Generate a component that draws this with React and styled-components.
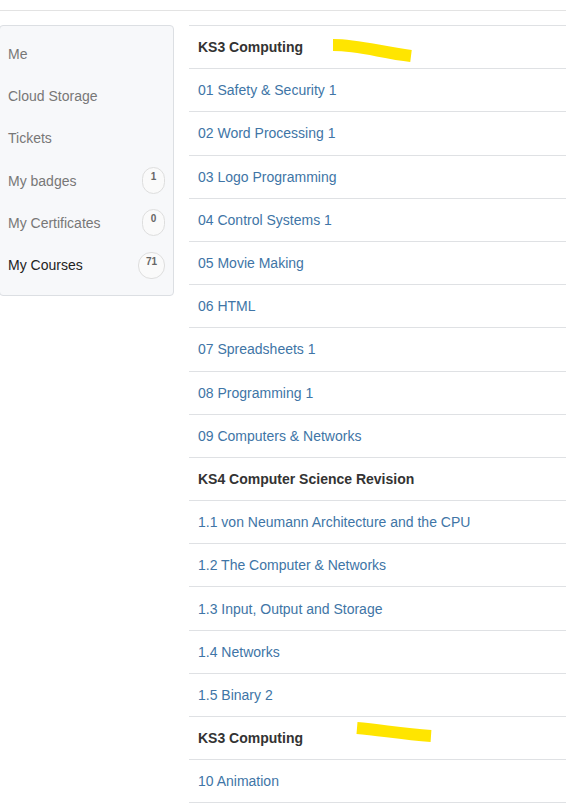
import React from 'react';
import styled, { createGlobalStyle } from 'styled-components';

const Global = createGlobalStyle`
  body {
    margin: 0;
    background: #fff;
    font-family: 'Liberation Sans', Arial, sans-serif;
    font-size: 14px;
    overflow: hidden;
  }
`;

const TopRule = styled.div`
  height: 10px;
  border-bottom: 1px solid #e3e3e3;
`;

const Layout = styled.div`
  display: flex;
  align-items: flex-start;
  gap: 15px;
  margin-top: 14px;
`;

const Sidebar = styled.nav`
  flex: 0 0 175px;
  margin-left: -1px;
  box-sizing: border-box;
  padding: 7px 8px 9px 8px;
  background: #f7f8fa;
  border: 1px solid #dcdfe3;
  border-radius: 4px;
`;

const NavItem = styled.div`
  display: flex;
  align-items: center;
  justify-content: space-between;
  height: 42.2px;
  color: ${p => (p.active ? '#222' : '#777')};
`;

const Badge = styled.span`
  box-sizing: border-box;
  min-width: 23px;
  height: 27px;
  padding: 3px 7px 0;
  border: 1px solid #dedede;
  border-radius: 13px;
  background: #fafafa;
  font-size: 10px;
  font-weight: bold;
  line-height: 12px;
  color: #666;
  text-align: center;
`;

const CourseList = styled.div`
  flex: 1;
  border-top: 1px solid #dfe1e4;
  min-width: 0;
`;

const Row = styled.div`
  position: relative;
  box-sizing: border-box;
  display: flex;
  align-items: center;
  height: 43.2px;
  padding-left: 9px;
  border-bottom: 1px solid #dfe1e4;
  color: ${p => (p.heading ? '#333' : '#4075a6')};
  font-weight: ${p => (p.heading ? 'bold' : 'normal')};
  white-space: nowrap;
`;

const Marker = styled.svg`
  position: absolute;
  left: 0;
  top: 0;
  overflow: visible;
  pointer-events: none;
`;

const nav = [
  { label: 'Me' },
  { label: 'Cloud Storage' },
  { label: 'Tickets' },
  { label: 'My badges', count: 1 },
  { label: 'My Certificates', count: 0 },
  { label: 'My Courses', count: 71, active: true },
];

const rows = [
  { text: 'KS3 Computing', heading: true, mark: 'M144,19 C170,19 190,26 222,30' },
  { text: '01 Safety & Security 1' },
  { text: '02 Word Processing 1' },
  { text: '03 Logo Programming' },
  { text: '04 Control Systems 1' },
  { text: '05 Movie Making' },
  { text: '06 HTML' },
  { text: '07 Spreadsheets 1' },
  { text: '08 Programming 1' },
  { text: '09 Computers & Networks' },
  { text: 'KS4 Computer Science Revision', heading: true },
  { text: '1.1 von Neumann Architecture and the CPU' },
  { text: '1.2 The Computer & Networks' },
  { text: '1.3 Input, Output and Storage' },
  { text: '1.4 Networks' },
  { text: '1.5 Binary 2' },
  { text: 'KS3 Computing', heading: true, mark: 'M168,11 C192,13 212,17 242,19' },
  { text: '10 Animation' },
];

export default function App() {
  return (
    <>
      <Global />
      <TopRule />
      <Layout>
        <Sidebar>
          {nav.map(n => (
            <NavItem key={n.label} active={n.active}>
              {n.label}
              {n.count !== undefined && <Badge>{n.count}</Badge>}
            </NavItem>
          ))}
        </Sidebar>
        <CourseList>
          {rows.map((r, i) => (
            <Row key={i} heading={r.heading}>
              {r.text}
              {r.mark && (
                <Marker width="1" height="1">
                  <path d={r.mark} stroke="#ffe500" strokeWidth="12" fill="none" />
                </Marker>
              )}
            </Row>
          ))}
        </CourseList>
      </Layout>
    </>
  );
}
